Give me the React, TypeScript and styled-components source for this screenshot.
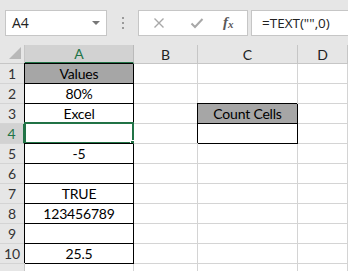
import styled, { createGlobalStyle } from 'styled-components';

const GlobalStyle = createGlobalStyle`
  html, body {
    margin: 0;
    padding: 0;
    background: #ffffff;
  }
  body {
    width: 348px;
    height: 271px;
    overflow: hidden;
    font-family: Lato, "Liberation Sans", sans-serif;
  }
`;

type CellData = {
  text?: string;
  shaded?: boolean;
  boxed?: boolean;
};

const COLUMNS = ['A', 'B', 'C', 'D'];

const rows: CellData[][] = [
  [{ text: 'Values', shaded: true, boxed: true }, {}, {}, {}],
  [{ text: '80%', boxed: true }, {}, {}, {}],
  [{ text: 'Excel', boxed: true }, {}, { text: 'Count Cells', shaded: true, boxed: true }, {}],
  [{ text: '', boxed: true }, {}, { boxed: true }, {}],
  [{ text: '-5', boxed: true }, {}, {}, {}],
  [{ text: '', boxed: true }, {}, {}, {}],
  [{ text: 'TRUE', boxed: true }, {}, {}, {}],
  [{ text: '123456789', boxed: true }, {}, {}, {}],
  [{ text: '', boxed: true }, {}, {}, {}],
  [{ text: '25.5', boxed: true }, {}, {}, {}],
  [{}, {}, {}, {}],
];

const SELECTED_ROW = 4;

export default function App(): JSX.Element {
  return (
    <>
      <GlobalStyle />
      <Window>
        <FormulaBar>
          <NameBox>
            <span>A4</span>
            <DropArrow />
          </NameBox>
          <Grip>
            <i />
            <i />
            <i />
          </Grip>
          <FxBox>
            <svg width="12" height="12" viewBox="0 0 12 12">
              <path d="M1.5 1.5 L10.5 10.5 M10.5 1.5 L1.5 10.5" stroke="#a8a8a8" strokeWidth="1.4" fill="none" />
            </svg>
            <svg width="14" height="12" viewBox="0 0 14 12">
              <path d="M1.5 6.5 L5 10 L12.5 2" stroke="#a8a8a8" strokeWidth="2" fill="none" />
            </svg>
            <FxLabel>
              f<sub>x</sub>
            </FxLabel>
          </FxBox>
          <FormulaInput>=TEXT("",0)</FormulaInput>
        </FormulaBar>

        <Sheet>
          <Corner>
            <svg width="12" height="12" viewBox="0 0 12 12">
              <path d="M12 0 L12 12 L0 12 Z" fill="#b8b8b8" />
            </svg>
          </Corner>
          {COLUMNS.map((col) => (
            <ColHeader key={col} $selected={col === 'A'}>
              {col}
            </ColHeader>
          ))}

          {rows.map((cells, r) => {
            const rowNumber = r + 1;
            return [
              <RowHeader key={`h${rowNumber}`} $selected={rowNumber === SELECTED_ROW}>
                {rowNumber <= 10 ? rowNumber : ''}
              </RowHeader>,
              ...cells.map((cell, c) => (
                <Cell
                  key={`${rowNumber}-${c}`}
                  $shaded={cell.shaded}
                  $boxed={cell.boxed}
                >
                  {cell.text}
                  {rowNumber === SELECTED_ROW && c === 0 && (
                    <>
                      <Selection />
                      <FillHandle />
                    </>
                  )}
                </Cell>
              )),
            ];
          })}
        </Sheet>
      </Window>
    </>
  );
}

const Window = styled.div`
  width: 348px;
  height: 271px;
  overflow: hidden;
  background: #e6e6e6;
`;

const FormulaBar = styled.div`
  height: 45px;
  display: flex;
  align-items: center;
  padding-left: 5px;
  background: #e6e6e6;
  box-sizing: border-box;
  font-family: "Open Sans", "Noto Sans", sans-serif;
`;

const NameBox = styled.div`
  width: 102px;
  height: 26px;
  box-sizing: border-box;
  border: 1px solid #c6c6c6;
  background: #ffffff;
  display: flex;
  align-items: center;
  justify-content: space-between;
  padding: 0 6px 0 6px;
  font-size: 14px;
  color: #222222;
`;

const DropArrow = styled.span`
  width: 0;
  height: 0;
  border-left: 4px solid transparent;
  border-right: 4px solid transparent;
  border-top: 4px solid #777777;
`;

const Grip = styled.div`
  width: 31px;
  display: flex;
  flex-direction: column;
  align-items: center;
  gap: 3px;

  i {
    display: block;
    width: 2px;
    height: 2px;
    background: #9a9a9a;
  }
`;

const FxBox = styled.div`
  width: 110px;
  height: 26px;
  box-sizing: border-box;
  border: 1px solid #c6c6c6;
  background: #ffffff;
  display: flex;
  align-items: center;
  padding-left: 14px;
  gap: 25px;
`;

const FxLabel = styled.span`
  font-family: "Liberation Serif", serif;
  font-style: italic;
  font-weight: bold;
  font-size: 15px;
  color: #595959;
  margin-left: -6px;

  sub {
    font-size: 11px;
    vertical-align: baseline;
    position: relative;
    top: 1px;
  }
`;

const FormulaInput = styled.div`
  flex: 1;
  height: 26px;
  margin-left: 3px;
  box-sizing: border-box;
  border: 1px solid #c6c6c6;
  border-right: none;
  background: #ffffff;
  display: flex;
  align-items: center;
  padding-left: 10px;
  font-size: 13.5px;
  color: #222222;
`;

const Sheet = styled.div`
  display: grid;
  grid-template-columns: 25px 109px 64px 100px 50px;
  grid-template-rows: 19px repeat(11, 20px);
  background: #ffffff;
`;

const Corner = styled.div`
  background: #e6e6e6;
  border-right: 1px solid #c6c6c6;
  border-bottom: 1px solid #c6c6c6;
  display: flex;
  align-items: flex-end;
  justify-content: flex-end;
  padding: 0 3px 4px 0;
`;

type HeaderProps = { $selected?: boolean };

const ColHeader = styled.div<HeaderProps>`
  background: ${({ $selected }) => ($selected ? '#d2d2d2' : '#e6e6e6')};
  color: ${({ $selected }) => ($selected ? '#217346' : '#222222')};
  border-right: 1px solid ${({ $selected }) => ($selected ? '#bababa' : '#c6c6c6')};
  border-bottom: ${({ $selected }) => ($selected ? '2px solid #217346' : '1px solid #c6c6c6')};
  display: flex;
  align-items: center;
  justify-content: center;
  font-size: 14px;
`;

const RowHeader = styled.div<HeaderProps>`
  background: ${({ $selected }) => ($selected ? '#d2d2d2' : '#e6e6e6')};
  color: ${({ $selected }) => ($selected ? '#217346' : '#333333')};
  border-right: ${({ $selected }) => ($selected ? '2px solid #217346' : '1px solid #c6c6c6')};
  border-bottom: 1px solid #d4d4d4;
  display: flex;
  align-items: center;
  justify-content: center;
  font-size: 14px;
`;

type CellProps = { $shaded?: boolean; $boxed?: boolean };

const Cell = styled.div<CellProps>`
  position: relative;
  background: ${({ $shaded }) => ($shaded ? '#a6a6a6' : '#ffffff')};
  border-right: 1px solid ${({ $boxed }) => ($boxed ? '#000000' : '#d4d4d4')};
  border-bottom: 1px solid ${({ $boxed }) => ($boxed ? '#000000' : '#d4d4d4')};
  box-shadow: ${({ $boxed }) => ($boxed ? '-1px -1px 0 0 #000000' : 'none')};
  display: flex;
  align-items: center;
  justify-content: center;
  font-size: 14px;
  letter-spacing: -0.2px;
  color: #000000;
  white-space: nowrap;
`;

const Selection = styled.div`
  position: absolute;
  left: -1px;
  top: -2px;
  right: -1px;
  bottom: -1px;
  border: 2px solid #217346;
  pointer-events: none;
`;

const FillHandle = styled.div`
  position: absolute;
  right: -4px;
  bottom: -4px;
  width: 5px;
  height: 5px;
  background: #217346;
  border: 1px solid #ffffff;
`;
